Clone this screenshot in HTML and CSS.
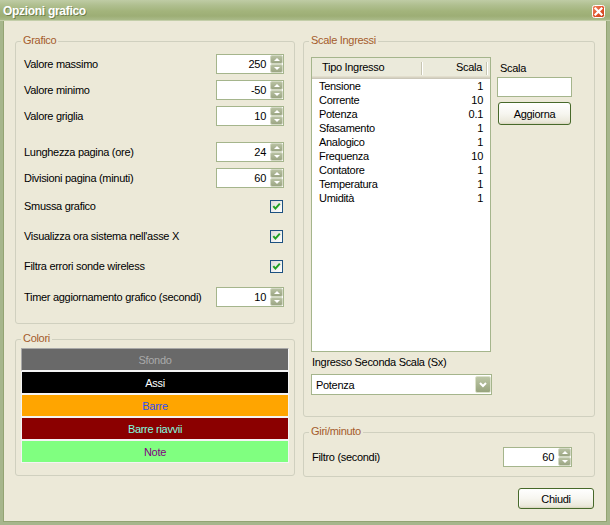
FILE: index.html
```html
<!DOCTYPE html>
<html lang="it">
<head>
<meta charset="utf-8">
<title>Opzioni grafico</title>
<link rel="stylesheet" href="styles.css">
</head>
<body>
<div class="window">
  <div class="titlebar">
    <span class="title">Opzioni grafico</span>
    <svg class="close" width="13" height="13" viewBox="0 0 13 13">
      <defs>
        <linearGradient id="cg" x1="0" y1="0" x2="1" y2="1">
          <stop offset="0" stop-color="#F08A66"/>
          <stop offset="0.5" stop-color="#E2552F"/>
          <stop offset="1" stop-color="#C93E17"/>
        </linearGradient>
      </defs>
      <rect x="0.5" y="0.5" width="12" height="12" rx="2" fill="url(#cg)" stroke="#fff"/>
      <path d="M3.5 3.5 L9.5 9.5 M9.5 3.5 L3.5 9.5" stroke="#fff" stroke-width="2.2" stroke-linecap="square"/>
    </svg>
  </div>
  <div class="client">
    <div class="col-left">
      <div class="group grafico">
        <span class="legend">Grafico</span>
        <div class="row">
          <span>Valore massimo</span>
          <div class="spin"><span class="val">250</span><span class="spin-btns"><span class="sb up"></span><span class="sb down"></span></span></div>
        </div>
        <div class="row mt6">
          <span>Valore minimo</span>
          <div class="spin"><span class="val">-50</span><span class="spin-btns"><span class="sb up"></span><span class="sb down"></span></span></div>
        </div>
        <div class="row mt6">
          <span>Valore griglia</span>
          <div class="spin"><span class="val">10</span><span class="spin-btns"><span class="sb up"></span><span class="sb down"></span></span></div>
        </div>
        <div class="row mt16">
          <span>Lunghezza pagina (ore)</span>
          <div class="spin"><span class="val">24</span><span class="spin-btns"><span class="sb up"></span><span class="sb down"></span></span></div>
        </div>
        <div class="row mt6">
          <span>Divisioni pagina (minuti)</span>
          <div class="spin"><span class="val">60</span><span class="spin-btns"><span class="sb up"></span><span class="sb down"></span></span></div>
        </div>
        <div class="row mt8">
          <span>Smussa grafico</span>
          <span class="cb"><svg width="11" height="11" viewBox="0 0 11 11"><path d="M2.3 5.2 L4.4 7.6 L8.8 2.6" fill="none" stroke="#21A121" stroke-width="2"/></svg></span>
        </div>
        <div class="row mt10">
          <span>Visualizza ora sistema nell'asse X</span>
          <span class="cb"><svg width="11" height="11" viewBox="0 0 11 11"><path d="M2.3 5.2 L4.4 7.6 L8.8 2.6" fill="none" stroke="#21A121" stroke-width="2"/></svg></span>
        </div>
        <div class="row mt10">
          <span>Filtra errori sonde wireless</span>
          <span class="cb"><svg width="11" height="11" viewBox="0 0 11 11"><path d="M2.3 5.2 L4.4 7.6 L8.8 2.6" fill="none" stroke="#21A121" stroke-width="2"/></svg></span>
        </div>
        <div class="row mt11">
          <span>Timer aggiornamento grafico (secondi)</span>
          <div class="spin"><span class="val">10</span><span class="spin-btns"><span class="sb up"></span><span class="sb down"></span></span></div>
        </div>
      </div>
      <div class="group colori">
        <span class="legend">Colori</span>
        <div class="bar bar-sfondo">Sfondo</div>
        <div class="bar bar-assi">Assi</div>
        <div class="bar bar-barre">Barre</div>
        <div class="bar bar-riavvii">Barre riavvii</div>
        <div class="bar bar-note">Note</div>
      </div>
    </div>
    <div class="col-right">
      <div class="group scale">
        <span class="legend">Scale Ingressi</span>
        <div class="scale-top">
          <div class="list">
            <div class="list-head">
              <span class="h-cell h1">Tipo Ingresso</span>
              <span class="h-cell h2">Scala</span>
            </div>
            <div class="list-row"><span class="c1">Tensione</span><span class="c2">1</span></div>
            <div class="list-row"><span class="c1">Corrente</span><span class="c2">10</span></div>
            <div class="list-row"><span class="c1">Potenza</span><span class="c2">0.1</span></div>
            <div class="list-row"><span class="c1">Sfasamento</span><span class="c2">1</span></div>
            <div class="list-row"><span class="c1">Analogico</span><span class="c2">1</span></div>
            <div class="list-row"><span class="c1">Frequenza</span><span class="c2">10</span></div>
            <div class="list-row"><span class="c1">Contatore</span><span class="c2">1</span></div>
            <div class="list-row"><span class="c1">Temperatura</span><span class="c2">1</span></div>
            <div class="list-row"><span class="c1">Umidità</span><span class="c2">1</span></div>
          </div>
          <div class="side">
            <span class="side-label">Scala</span>
            <div class="textbox"></div>
            <button class="btn btn-aggiorna">Aggiorna</button>
          </div>
        </div>
        <div class="combo-label">Ingresso Seconda Scala (Sx)</div>
        <div class="combo">
          <span>Potenza</span>
          <span class="combo-btn"><svg width="14" height="15" viewBox="0 0 14 15"><path d="M4 6 L7 9 L10 6" fill="none" stroke="#fff" stroke-width="2"/></svg></span>
        </div>
      </div>
      <div class="group giri">
        <span class="legend">Giri/minuto</span>
        <div class="row">
          <span>Filtro (secondi)</span>
          <div class="spin spin-wide"><span class="val">60</span><span class="spin-btns"><span class="sb up"></span><span class="sb down"></span></span></div>
        </div>
      </div>
      <div class="footer">
        <button class="btn btn-chiudi">Chiudi</button>
      </div>
    </div>
  </div>
</div>
</body>
</html>
```

FILE: styles.css
```css
html, body {
  margin: 0;
  padding: 0;
}

body {
  font-family: "Liberation Sans", Arial, sans-serif;
  font-size: 11px;
  letter-spacing: -0.3px;
  color: #000;
  background: #ECE9D8;
}

.window {
  width: 610px;
  height: 525px;
  display: flex;
  flex-direction: column;
  box-sizing: border-box;
  overflow: hidden;
}

.titlebar {
  height: 21px;
  flex: none;
  box-sizing: border-box;
  display: flex;
  align-items: center;
  justify-content: space-between;
  padding: 2px 5px 0 3px;
  background: linear-gradient(#BFCCA5 0%, #B0BF90 25%, #A3B47C 55%, #9DAE75 80%, #AABA89 100%);
  border-bottom: 1px solid #C3CEA9;
}

.title {
  color: #fff;
  font-weight: bold;
  font-size: 12px;
  letter-spacing: -0.3px;
  text-shadow: 1px 1px 0 rgba(70, 85, 40, 0.55);
}

.close {
  display: block;
}

.client {
  flex: 1;
  display: flex;
  gap: 8px;
  padding: 20px 12px 0 12px;
  border: 3px solid #A6B68C;
  border-top: none;
  box-shadow: inset 1px 0 0 #93A473, inset -1px 0 0 #93A473, inset 0 -1px 0 #93A473;
}

.col-left {
  width: 280px;
  flex: none;
  display: flex;
  flex-direction: column;
}

.col-right {
  width: 292px;
  flex: none;
  display: flex;
  flex-direction: column;
}

.group {
  position: relative;
  box-sizing: border-box;
  border: 1px solid #D0D0BF;
  border-radius: 3px;
  flex: none;
}

.legend {
  position: absolute;
  left: 5px;
  top: -8px;
  padding: 0 2px;
  line-height: 13px;
  background: #ECE9D8;
  color: #A45C2C;
}

.grafico {
  height: 283px;
  padding: 12px 10px 0 8px;
  display: flex;
  flex-direction: column;
}

.row {
  display: flex;
  align-items: center;
  justify-content: space-between;
  height: 20px;
  flex: none;
}

.mt6 { margin-top: 6px; }
.mt8 { margin-top: 8px; }
.mt10 { margin-top: 10px; }
.mt11 { margin-top: 11px; }
.mt16 { margin-top: 16px; }

.spin {
  width: 68px;
  height: 20px;
  box-sizing: border-box;
  border: 1px solid #A5B58C;
  background: #fff;
  display: flex;
  align-items: center;
  justify-content: flex-end;
}

.spin-wide {
  width: 69px;
}

.val {
  padding-right: 4px;
}

.spin-btns {
  display: flex;
  flex-direction: column;
  width: 13px;
  height: 18px;
}

.sb {
  flex: 1;
  box-sizing: border-box;
  border: 1px solid #D3D9C4;
  border-radius: 2px;
  background: linear-gradient(#B8C1A2, #9BA583);
  display: flex;
  align-items: center;
  justify-content: center;
}

.sb::before {
  content: "";
  width: 0;
  height: 0;
  border-left: 3px solid transparent;
  border-right: 3px solid transparent;
}

.up::before {
  border-bottom: 3px solid #fff;
}

.down::before {
  border-top: 3px solid #fff;
}

.cb {
  width: 13px;
  height: 13px;
  box-sizing: border-box;
  border: 1px solid #1C5180;
  background: linear-gradient(135deg, #DCDCD7, #FFFFFF);
  margin-right: 1px;
  display: flex;
}

.cb svg {
  display: block;
}

.colori {
  height: 137px;
  margin-top: 15px;
  padding: 8px 5px 0 5px;
}

.bar {
  height: 23px;
  box-sizing: border-box;
  border: 1px solid #F4F4F4;
  display: flex;
  align-items: center;
  justify-content: center;
}

.bar-sfondo {
  background: #696969;
  color: #A9A9A9;
  border-color: #A8A8A8 #F4F4F4 #F4F4F4 #A8A8A8;
}

.bar-assi {
  background: #000;
  color: #fff;
}

.bar-barre {
  background: #FFA500;
  color: #2F4FF0;
}

.bar-riavvii {
  background: #8B0000;
  color: #7FFFE0;
}

.bar-note {
  background: #80FF80;
  color: #800080;
}

.scale {
  height: 376px;
  padding: 15px 0 0 7px;
  display: flex;
  flex-direction: column;
}

.scale-top {
  display: flex;
  gap: 6px;
}

.list {
  width: 180px;
  height: 295px;
  box-sizing: border-box;
  border: 1px solid #A5B58C;
  background: #fff;
}

.list-head {
  height: 21px;
  display: flex;
  background: #EBEADB;
  box-shadow: inset 0 -1px 0 #CBC7B8, inset 0 -2px 0 #D6D2C2, inset 0 -3px 0 #E2DECD;
}

.h-cell {
  position: relative;
  display: flex;
  align-items: center;
  height: 18px;
  box-sizing: border-box;
}

.h-cell::after {
  content: "";
  position: absolute;
  right: 0;
  top: 4px;
  bottom: 1px;
  width: 1px;
  background: #C7C5B2;
  box-shadow: 1px 0 0 #fff;
}

.h1 {
  width: 110px;
  padding-left: 10px;
}

.h2 {
  width: 65px;
  justify-content: flex-end;
  padding-right: 5px;
}

.list-row {
  display: flex;
  height: 14px;
  line-height: 14px;
}

.c1 {
  width: 110px;
  padding-left: 7px;
  box-sizing: border-box;
}

.c2 {
  width: 64px;
  text-align: right;
  padding-right: 3px;
  box-sizing: border-box;
}

.side {
  width: 75px;
  display: flex;
  flex-direction: column;
  padding-top: 5px;
}

.side-label {
  line-height: 13px;
  padding-left: 3px;
}

.textbox {
  width: 75px;
  height: 20px;
  margin-top: 2px;
  box-sizing: border-box;
  border: 1px solid #A5B58C;
  background: #fff;
}

.btn {
  font: inherit;
  letter-spacing: inherit;
  color: #000;
  box-sizing: border-box;
  padding: 0;
  border: 1px solid #47692A;
  border-radius: 3px;
  background: linear-gradient(#FFFFFF 0%, #F7F6F0 50%, #ECEADD 85%, #E0DDCB 100%);
  box-shadow: inset 0 -1px 0 #DCD9C4, inset 1px 0 0 #FBFBF8;
}

.btn-aggiorna {
  width: 73px;
  height: 23px;
  margin-top: 5px;
  margin-left: 1px;
}

.combo-label {
  margin-top: 4px;
  line-height: 13px;
  padding-left: 1px;
}

.combo {
  margin-top: 5px;
  width: 181px;
  height: 21px;
  box-sizing: border-box;
  border: 1px solid #A5B58C;
  background: #fff;
  display: flex;
  align-items: center;
  justify-content: space-between;
  padding-left: 4px;
}

.combo-btn {
  width: 16px;
  height: 17px;
  box-sizing: border-box;
  border: 1px solid #DCE2CB;
  border-radius: 2px;
  background: linear-gradient(#BCC6A5, #98A47E);
  display: flex;
  align-items: center;
  justify-content: center;
}

.combo-btn svg {
  display: block;
}

.giri {
  height: 45px;
  margin-top: 15px;
  padding: 14px 22px 0 8px;
}

.footer {
  display: flex;
  justify-content: flex-end;
  margin-top: 11px;
  padding-right: 1px;
}

.btn-chiudi {
  width: 76px;
  height: 21px;
}
```
